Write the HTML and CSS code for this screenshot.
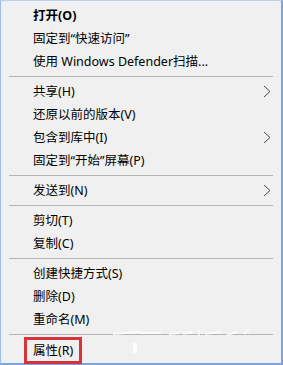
FILE: index.html
```html
<!DOCTYPE html>
<html lang="zh-CN">
  <head>
    <meta charset="UTF-8" />
    <title>右键菜单</title>
    <link rel="stylesheet" href="styles.css">
  </head>
  <body>
    <div class="menu">
      <div class="item bold">打开(O)</div>
      <div class="item">固定到“快速访问”</div>
      <div class="item">使用 Windows Defender扫描...</div>
      <div class="sep"></div>
      <div class="item">共享(H)
        <svg class="arrow" width="8" height="13" viewBox="0 0 8 13"><polyline points="1,1 7,6.5 1,12" fill="none" stroke="#4a4a4a" stroke-width="1" /></svg>
      </div>
      <div class="item">还原以前的版本(V)</div>
      <div class="item">包含到库中(I)
        <svg class="arrow" width="8" height="13" viewBox="0 0 8 13"><polyline points="1,1 7,6.5 1,12" fill="none" stroke="#4a4a4a" stroke-width="1" /></svg>
      </div>
      <div class="item">固定到“开始”屏幕(P)</div>
      <div class="sep"></div>
      <div class="item">发送到(N)
        <svg class="arrow" width="8" height="13" viewBox="0 0 8 13"><polyline points="1,1 7,6.5 1,12" fill="none" stroke="#4a4a4a" stroke-width="1" /></svg>
      </div>
      <div class="sep"></div>
      <div class="item">剪切(T)</div>
      <div class="item">复制(C)</div>
      <div class="sep"></div>
      <div class="item">创建快捷方式(S)</div>
      <div class="item">删除(D)</div>
      <div class="item">重命名(M)</div>
      <div class="sep"></div>
      <div class="item"><span class="mark">属性(R)</span></div>

      <!-- 水印 -->
      <svg class="watermark" width="170" height="30" viewBox="0 0 170 30">
        <g stroke="#ffffff" stroke-width="2" fill="none" opacity="0.8">
          <line x1="4" y1="7" x2="30" y2="5" />
          <line x1="30" y1="6" x2="52" y2="6" />
          <line x1="60" y1="7" x2="70" y2="6" />
          <line x1="74" y1="7" x2="84" y2="5" />
          <line x1="90" y1="3" x2="90" y2="9" />
          <line x1="96" y1="7" x2="112" y2="5" />
          <line x1="118" y1="8" x2="128" y2="5" />
          <line x1="135" y1="7" x2="140" y2="3" />
        </g>
        <rect x="24" y="16" width="4" height="10" fill="#ffffff" opacity="0.8" />
      </svg>
    </div>
  </body>
</html>
```

FILE: styles.css
```css
* {
  margin: 0;
  padding: 0;
  box-sizing: border-box;
}

body {
  width: 283px;
  height: 365px;
  overflow: hidden;
  background: #f0f0f0;
  font-family: "Noto Sans", "Noto Sans CJK SC", sans-serif;
  font-size: 12.5px;
  color: #000;
}

.menu {
  position: relative;
  width: 283px;
  height: 365px;
  background: #f0f0f0;
  border-top: 1px solid #b9d0ee;
  border-left: 1px solid #9dbce6;
  border-right: 2px solid #7aa6dd;
  border-bottom: 2px solid #7aa6dd;
  padding-top: 3px;
}

.item {
  position: relative;
  height: 23px;
  line-height: 23px;
  padding-left: 32px;
  white-space: nowrap;
}

.bold {
  font-weight: bold;
}

.sep {
  height: 7px;
  padding: 3px 8px 0 8px;
}

.sep::before {
  content: "";
  display: block;
  height: 1px;
  background: #b5b5b5;
}

.arrow {
  position: absolute;
  right: 10px;
  top: 5px;
}

.mark {
  display: inline-block;
  height: 27px;
  line-height: 21px;
  margin-left: -9px;
  margin-top: -1px;
  padding: 0 6px;
  border: 3px solid #d6343a;
  vertical-align: top;
}

.watermark {
  position: absolute;
  left: 108px;
  top: 326px;
}
```
